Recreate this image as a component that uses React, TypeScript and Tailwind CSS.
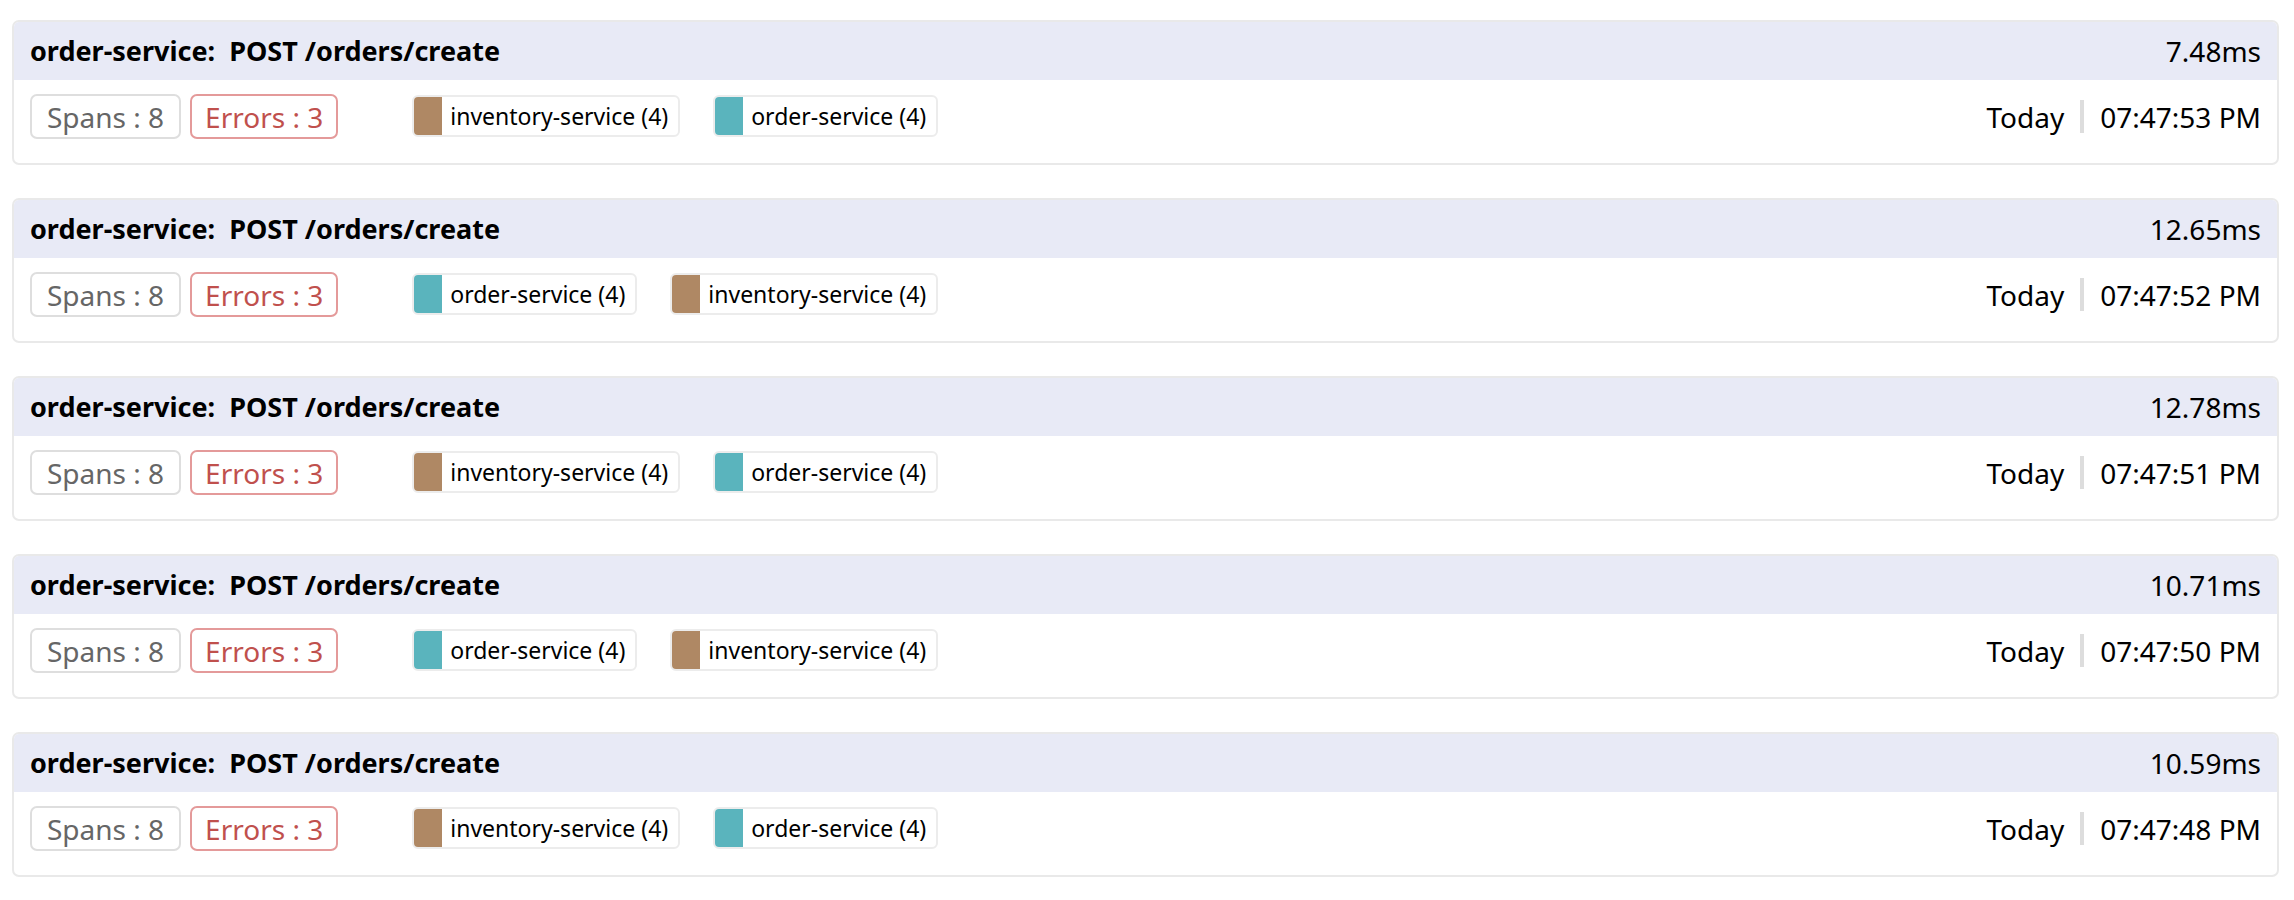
import React from 'react';

interface Service {
  name: string;
  count: number;
  color: string;
}

interface Trace {
  duration: string;
  time: string;
  services: Service[];
}

const INV: Service = { name: 'inventory-service', count: 4, color: 'bg-[#af8864]' };
const ORD: Service = { name: 'order-service', count: 4, color: 'bg-[#5ab4bd]' };

const traces: Trace[] = [
  { duration: '7.48ms', time: '07:47:53 PM', services: [INV, ORD] },
  { duration: '12.65ms', time: '07:47:52 PM', services: [ORD, INV] },
  { duration: '12.78ms', time: '07:47:51 PM', services: [INV, ORD] },
  { duration: '10.71ms', time: '07:47:50 PM', services: [ORD, INV] },
  { duration: '10.59ms', time: '07:47:48 PM', services: [INV, ORD] },
];

const TraceCard: React.FC<{ trace: Trace }> = ({ trace }) => (
  <div className="border-2 border-[#e9e9e9] rounded-[7px] overflow-hidden bg-white">
    <div className="h-[58px] bg-[#e8eaf6] flex items-center justify-between px-[16px] text-black">
      <span className="font-bold whitespace-pre text-[27px]">order-service:  POST /orders/create</span>
      <span className="text-[28px]">{trace.duration}</span>
    </div>
    <div className="h-[83px] flex items-start pt-[14px] px-[16px]">
      <div className="flex items-center gap-[9px]">
        <span className="h-[45px] px-[15px] flex items-center border-2 border-[#dedede] rounded-[7px] text-[28px] text-[#666]">
          Spans : 8
        </span>
        <span className="h-[45px] px-[13px] flex items-center border-2 border-[#e49a9a] rounded-[7px] text-[28px] text-[#c0504d]">
          Errors : 3
        </span>
      </div>
      <div className="flex items-center gap-[33px] ml-[74px] mt-[1px]">
        {trace.services.map((s) => (
          <div key={s.name} className="h-[42px] flex items-stretch border-2 border-[#ececec] rounded-[6px] overflow-hidden">
            <span className={`w-[28px] ${s.color}`}></span>
            <span className="flex items-center pl-[8px] pr-[10px] text-[23px] text-black">
              {s.name} ({s.count})
            </span>
          </div>
        ))}
      </div>
      <div className="ml-auto h-[45px] flex items-center text-[28px] text-black">
        <span>Today</span>
        <span className="w-[4px] h-[33px] bg-[#dddddd] ml-[16px] mr-[16px]"></span>
        <span>{trace.time}</span>
      </div>
    </div>
  </div>
);

export default function App() {
  return (
    <div className="w-full min-h-[900px] bg-white pl-[12px] pr-[15px] pt-[20px] flex flex-col gap-[33px] font-['Noto_Sans',sans-serif]">
      {traces.map((t, i) => (
        <TraceCard key={i} trace={t} />
      ))}
    </div>
  );
}
